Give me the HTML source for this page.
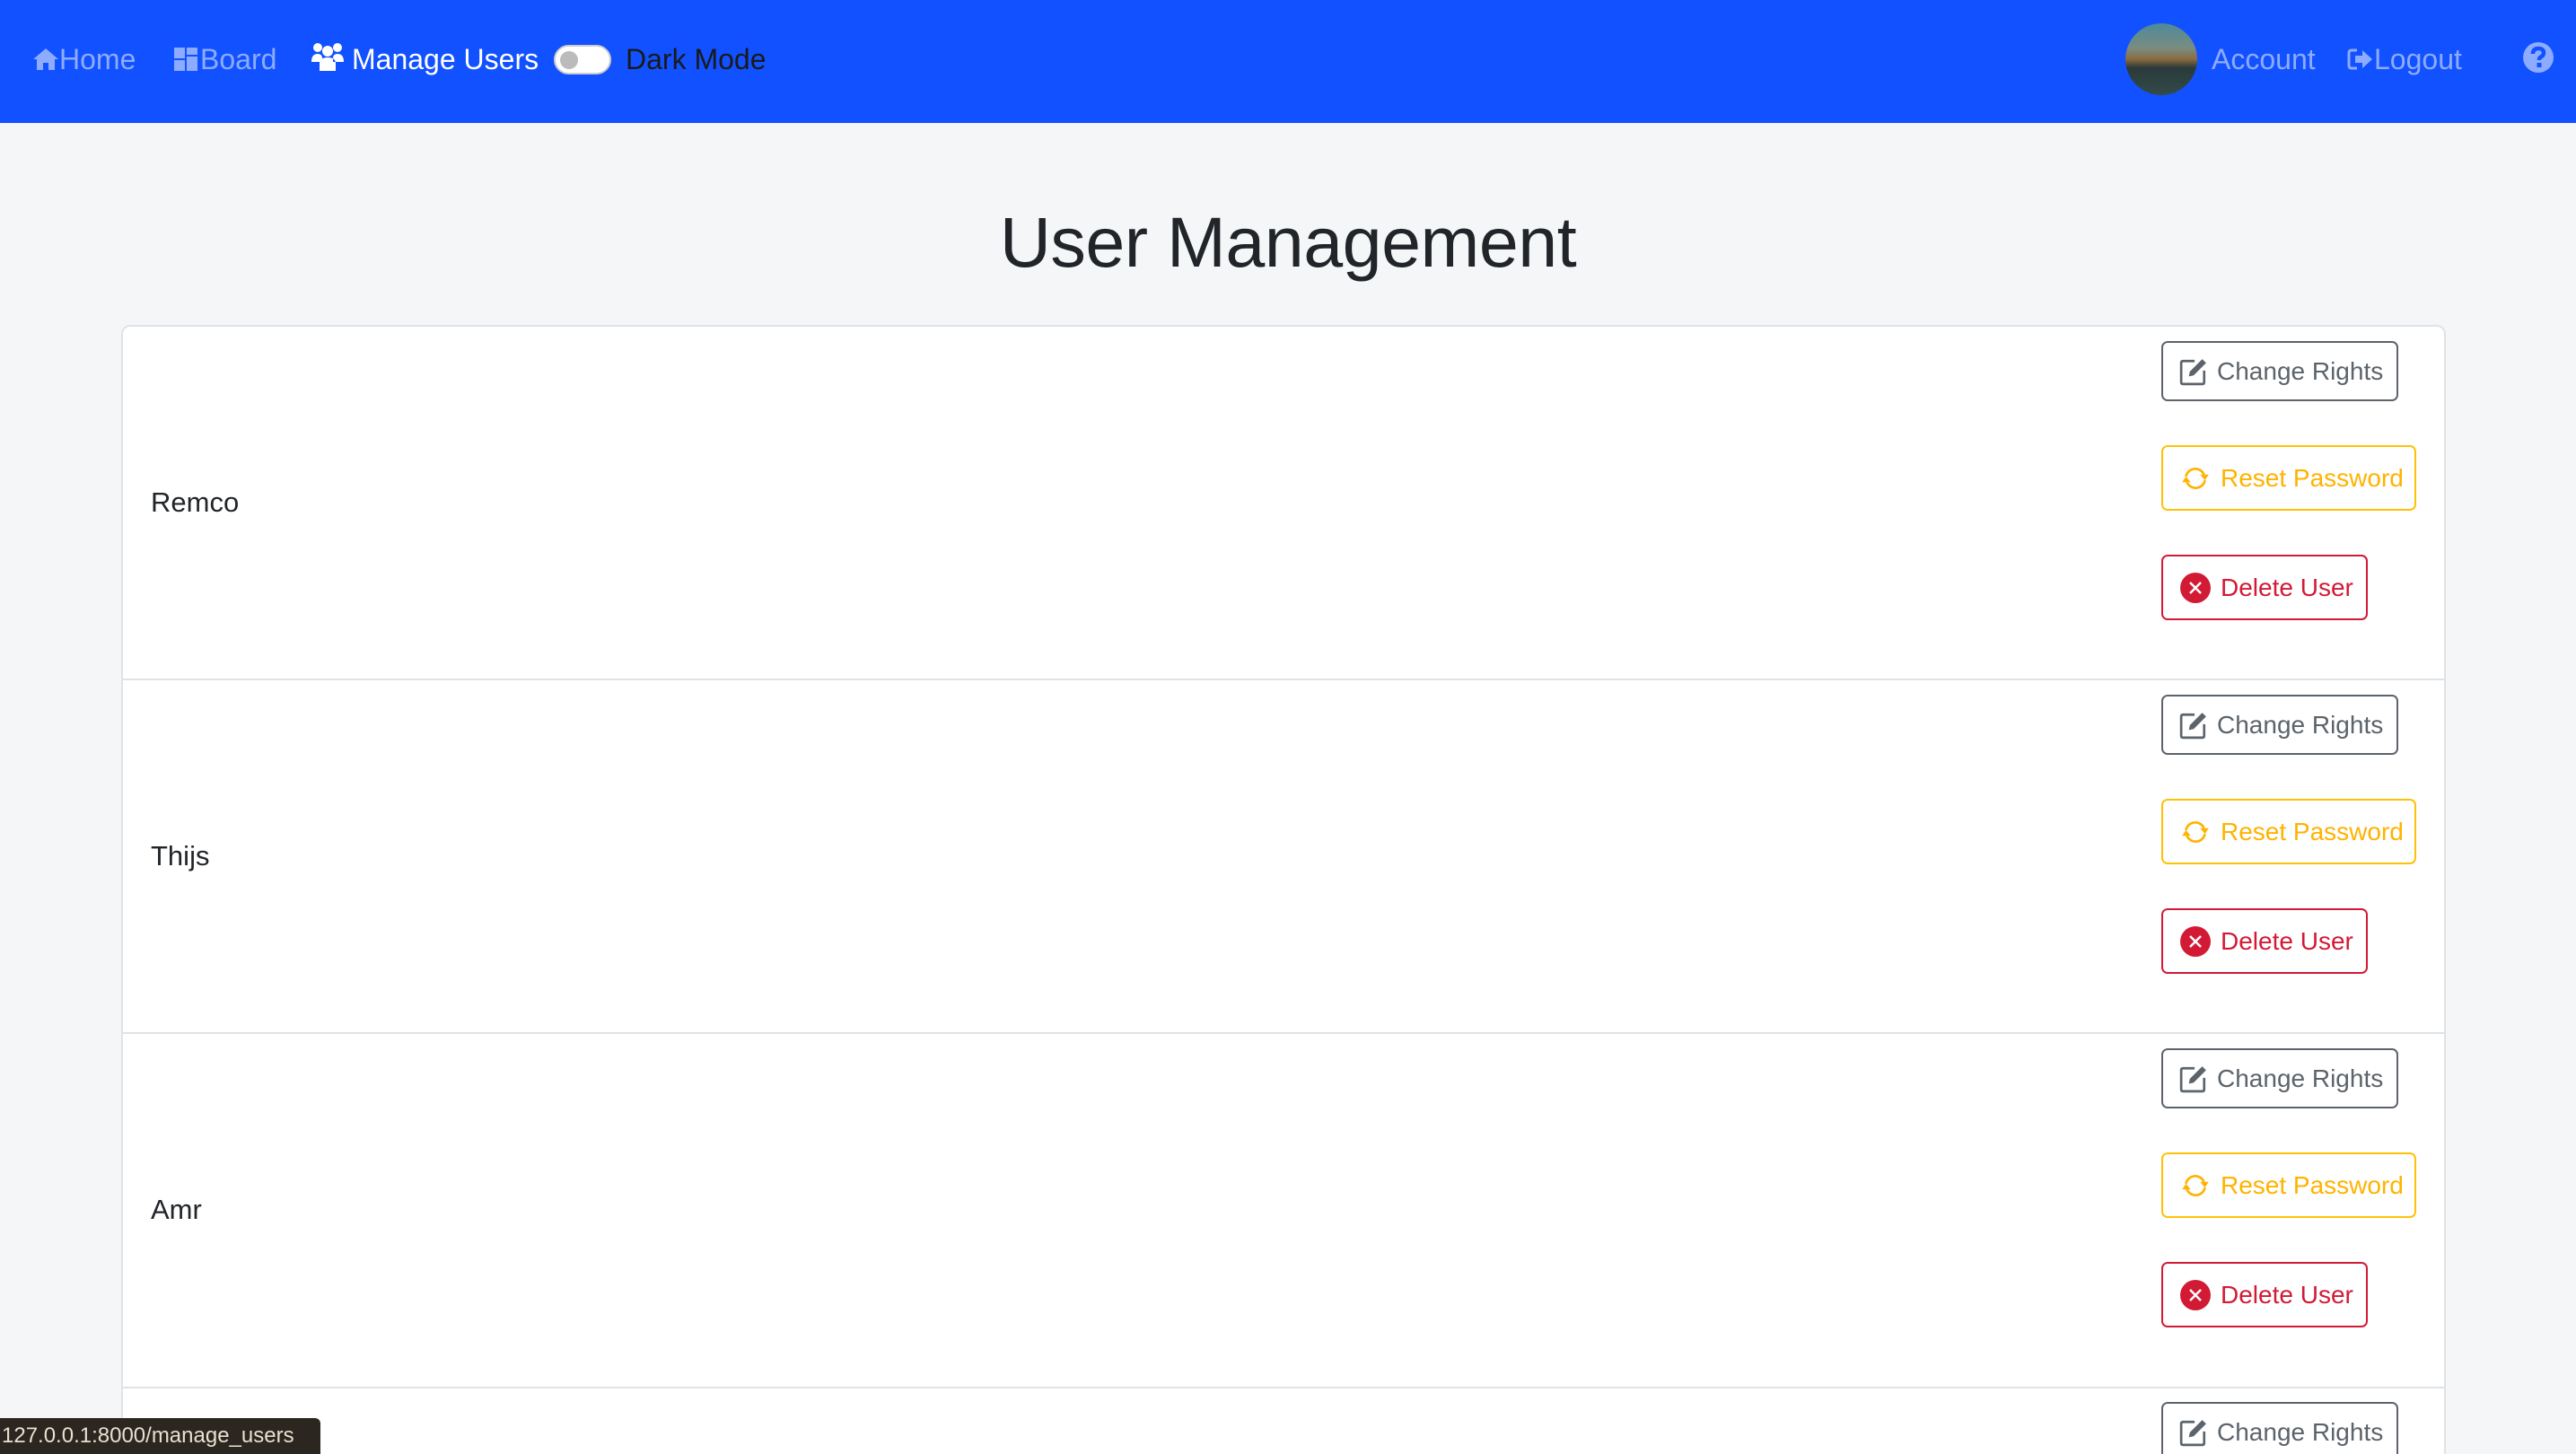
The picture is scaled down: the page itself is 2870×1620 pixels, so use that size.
<!DOCTYPE html>
<html><head><meta charset="utf-8"><style>
*{box-sizing:border-box;margin:0;padding:0}
html,body{width:2870px;height:1620px;overflow:hidden}
body{background:#f5f6f8;font-family:"Liberation Sans",sans-serif;position:relative}
.nav{position:absolute;left:0;top:0;width:2870px;height:137px;background:#1151ff}
.nl{position:absolute;top:46px;font-size:32px;line-height:40px;color:#8dabff;white-space:nowrap}
.title{position:absolute;top:222px;left:0;width:2870px;text-align:center;font-size:79px;color:#212529;line-height:96px;letter-spacing:-0.5px}
.card{position:absolute;left:135px;top:362px;width:2590px;height:1300px;background:#fff;border:2px solid #dfe2e6;border-bottom:none;border-radius:10px 10px 0 0}
.sep{position:absolute;left:136px;width:2588px;height:2px;background:#dfe2e6}
.name{position:absolute;left:168px;font-size:31px;color:#212529;line-height:36px}
.btn{position:absolute;left:2408px;border:2.5px solid;border-radius:7px;font-size:28px;display:flex;align-items:center;padding-left:18px;background:#fff;white-space:nowrap}
.b1{color:#5c636a;border-color:#5c636a;width:264px;height:67px}
.b2{color:#ffb300;border-color:#ffc107;width:284px;height:73px}
.b3{color:#d21a35;border-color:#d21a35;width:230px;height:73px}
.btn svg{margin-right:10px}
</style></head><body>
<div class="nav">
<div class="nl" style="left:36px"><svg width="30" height="28" viewBox="0 0 30 28" style="vertical-align:-3px"><path d="M15 2 L1 14 L5 14 L5 26 L12 26 L12 18 L18 18 L18 26 L25 26 L25 14 L29 14 Z" fill="#8dabff"/></svg>Home</div>
<div class="nl" style="left:193px"><svg width="30" height="30" viewBox="0 0 30 30" style="vertical-align:-4px"><rect x="1" y="2" width="12" height="12" fill="#8dabff"/><rect x="1" y="16" width="12" height="12" fill="#8dabff"/><rect x="15" y="2" width="12" height="8" fill="#8dabff"/><rect x="15" y="12" width="12" height="16" fill="#8dabff"/></svg>Board</div>
<div class="nl" style="left:346px;color:#fff"><svg width="38" height="34" viewBox="0 0 38 34" style="vertical-align:-4px;margin-right:8px"><circle cx="8" cy="6" r="5" fill="#fff"/><circle cx="30" cy="6" r="5" fill="#fff"/><circle cx="19" cy="10" r="6" fill="#fff"/><path d="M1 22 Q1 13 8 13 Q13 13 13 18 L13 22Z M37 22 Q37 13 30 13 Q25 13 25 18 L25 22Z M10 32 L10 24 Q10 17 19 17 Q28 17 28 24 L28 32Z" fill="#fff"/></svg>Manage Users</div>
<div style="position:absolute;left:617px;top:50px;width:64px;height:33px;border-radius:17px;background:#fff;border:2px solid #ccc"><div style="position:absolute;left:5px;top:5px;width:20px;height:20px;border-radius:50%;background:#bbb"></div></div>
<div class="nl" style="left:697px;color:#1a1a1a">Dark Mode</div>
<div style="position:absolute;left:2368px;top:26px;width:80px;height:80px;border-radius:50%;background:linear-gradient(#4d8a9a 0%,#7a8c80 35%,#8a6a40 50%,#2a3a3a 62%,#344a4a 100%)"></div>
<div class="nl" style="left:2464px">Account</div>
<div class="nl" style="left:2615px"><svg width="30" height="28" viewBox="0 0 30 28" style="vertical-align:-3px"><path d="M11 4 H5 Q2 4 2 7 V21 Q2 24 5 24 H11" stroke="#8dabff" stroke-width="3" fill="none"/><path d="M9 10 H17 V4 L28 14 L17 24 V18 H9Z" fill="#8dabff"/></svg>Logout</div>
<svg style="position:absolute;left:2810px;top:46px" width="36" height="36" viewBox="0 0 36 36"><circle cx="18" cy="18" r="17" fill="#8dabff"/><path d="M12 14 Q12 8 18 8 Q24 8 24 13 Q24 16 20 18 Q19 19 19 21" stroke="#1151ff" stroke-width="4.5" fill="none"/><rect x="16.5" y="24" width="5" height="5" fill="#1151ff"/></svg>
</div>
<div class="title">User Management</div>
<div class="card"></div>
<div class="sep" style="top:756px"></div>
<div class="sep" style="top:1150px"></div>
<div class="sep" style="top:1545px"></div>

<div class="name" style="top:542px">Remco</div>
<div class="name" style="top:936px">Thijs</div>
<div class="name" style="top:1330px">Amr</div>

<div class="btn b1" style="top:380px"><svg width="32" height="32" viewBox="0 0 30 30"><path d="M16 4 H4 Q2 4 2 6 V26 Q2 28 4 28 H24 Q26 28 26 26 V14" stroke="#5c636a" stroke-width="2.5" fill="none"/><path d="M10 20 L11 15 L24 2 L28 6 L15 19 Z" fill="#5c636a"/></svg>Change Rights</div>
<div class="btn b2" style="top:496px"><svg width="36" height="32" viewBox="0 0 34 30"><path d="M7 13 A10 10 0 0 1 26 11 M27 17 A10 10 0 0 1 8 19" stroke="#ffb300" stroke-width="2.5" fill="none"/><path d="M22 11 L31 11 L27 17Z M3 19 L12 19 L7 13Z" fill="#ffb300"/></svg>Reset Password</div>
<div class="btn b3" style="top:618px"><svg width="36" height="36" viewBox="0 0 36 36"><circle cx="18" cy="18" r="17" fill="#d21a35"/><path d="M12 12 L24 24 M24 12 L12 24" stroke="#fff" stroke-width="2.5"/></svg>Delete User</div>

<div class="btn b1" style="top:774px"><svg width="32" height="32" viewBox="0 0 30 30"><path d="M16 4 H4 Q2 4 2 6 V26 Q2 28 4 28 H24 Q26 28 26 26 V14" stroke="#5c636a" stroke-width="2.5" fill="none"/><path d="M10 20 L11 15 L24 2 L28 6 L15 19 Z" fill="#5c636a"/></svg>Change Rights</div>
<div class="btn b2" style="top:890px"><svg width="36" height="32" viewBox="0 0 34 30"><path d="M7 13 A10 10 0 0 1 26 11 M27 17 A10 10 0 0 1 8 19" stroke="#ffb300" stroke-width="2.5" fill="none"/><path d="M22 11 L31 11 L27 17Z M3 19 L12 19 L7 13Z" fill="#ffb300"/></svg>Reset Password</div>
<div class="btn b3" style="top:1012px"><svg width="36" height="36" viewBox="0 0 36 36"><circle cx="18" cy="18" r="17" fill="#d21a35"/><path d="M12 12 L24 24 M24 12 L12 24" stroke="#fff" stroke-width="2.5"/></svg>Delete User</div>

<div class="btn b1" style="top:1168px"><svg width="32" height="32" viewBox="0 0 30 30"><path d="M16 4 H4 Q2 4 2 6 V26 Q2 28 4 28 H24 Q26 28 26 26 V14" stroke="#5c636a" stroke-width="2.5" fill="none"/><path d="M10 20 L11 15 L24 2 L28 6 L15 19 Z" fill="#5c636a"/></svg>Change Rights</div>
<div class="btn b2" style="top:1284px"><svg width="36" height="32" viewBox="0 0 34 30"><path d="M7 13 A10 10 0 0 1 26 11 M27 17 A10 10 0 0 1 8 19" stroke="#ffb300" stroke-width="2.5" fill="none"/><path d="M22 11 L31 11 L27 17Z M3 19 L12 19 L7 13Z" fill="#ffb300"/></svg>Reset Password</div>
<div class="btn b3" style="top:1406px"><svg width="36" height="36" viewBox="0 0 36 36"><circle cx="18" cy="18" r="17" fill="#d21a35"/><path d="M12 12 L24 24 M24 12 L12 24" stroke="#fff" stroke-width="2.5"/></svg>Delete User</div>

<div class="btn b1" style="top:1562px"><svg width="32" height="32" viewBox="0 0 30 30"><path d="M16 4 H4 Q2 4 2 6 V26 Q2 28 4 28 H24 Q26 28 26 26 V14" stroke="#5c636a" stroke-width="2.5" fill="none"/><path d="M10 20 L11 15 L24 2 L28 6 L15 19 Z" fill="#5c636a"/></svg>Change Rights</div>

<div style="position:absolute;left:0;top:1580px;width:357px;height:40px;background:#2b2620;border-top-right-radius:6px;color:#e8e0d0;font-size:24px;line-height:40px;padding-left:2px;white-space:nowrap">127.0.0.1:8000/manage_users</div>
</body></html>
